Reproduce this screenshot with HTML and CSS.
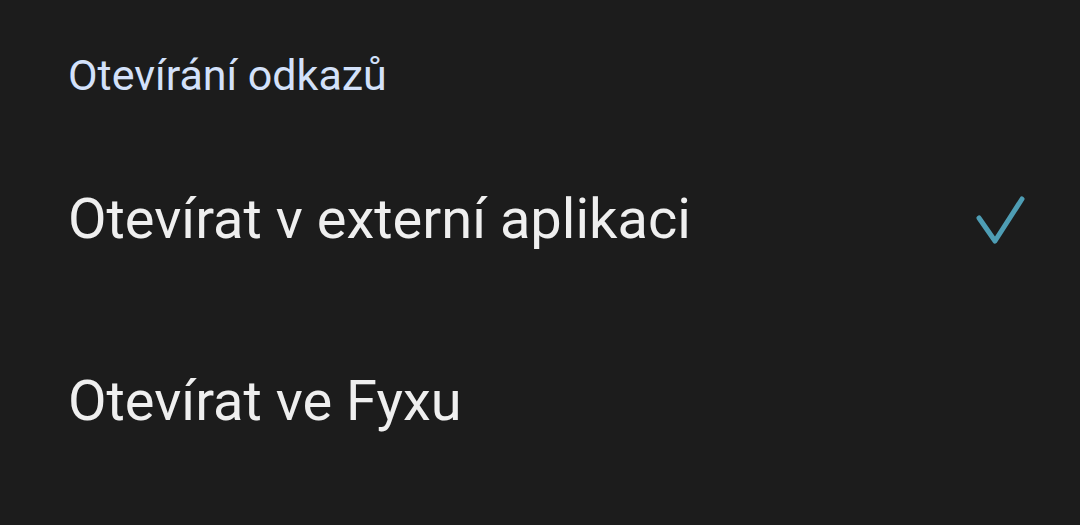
FILE: index.html
```html
<!DOCTYPE html>
<html lang="cs">
<head>
    <meta charset="UTF-8">
    <title>Otevírání odkazů</title>
    <link rel="stylesheet" href="styles.css">
</head>
<body>
    <div class="section">
        <div class="section-title">Otevírání odkazů</div>
        <div class="option">
            <span class="label">Otevírat v externí aplikaci</span>
            <svg class="check" width="52" height="56" viewBox="0 0 52 56">
                <path d="M3 27 L19 50 L46 8" fill="none" stroke="#4e9db4" stroke-width="5" stroke-linecap="round" stroke-linejoin="round"/>
            </svg>
        </div>
        <div class="option">
            <span class="label">Otevírat ve Fyxu</span>
        </div>
    </div>
</body>
</html>
```

FILE: styles.css
```css
html, body { margin: 0; padding: 0; background: #1c1c1c; }
body { font-family: Roboto, "Noto Sans", sans-serif; width: 1080px; height: 525px; overflow: hidden; }
.section { padding: 50px 52px 0 68px; }
.section-title { color: #d3e1fa; font-size: 43px; line-height: 50px; margin-bottom: 28px; }
.option { display: flex; align-items: center; justify-content: space-between; height: 182px; }
.label { color: #efefef; font-size: 56px; }
.check { display: block; }
```
